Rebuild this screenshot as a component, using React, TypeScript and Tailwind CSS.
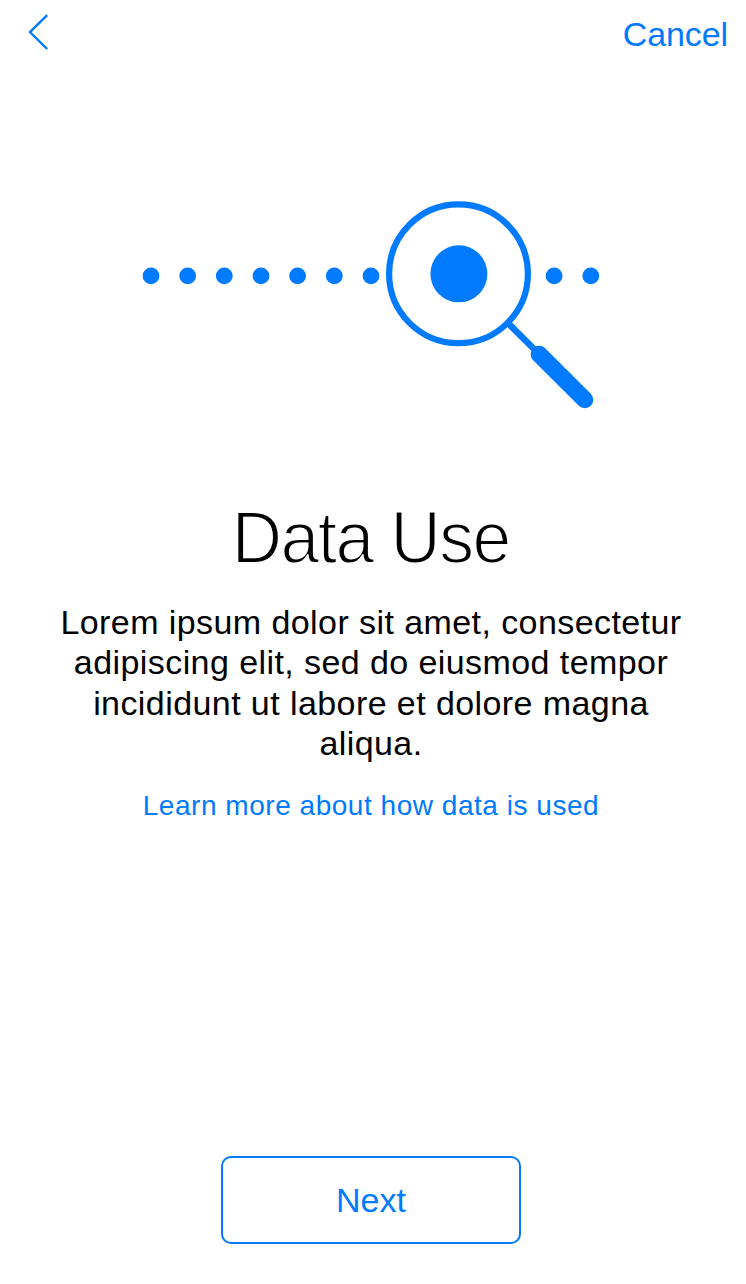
const dots = [151, 187.7, 224.3, 261, 297.6, 334.3, 371, 554.1, 590.8];

function DataIllustration() {
  return (
    <svg className="block h-[230px] w-[742px] text-[#007aff]" viewBox="0 190 742 230" fill="none" aria-hidden="true">
      {dots.map((x) => (
        <circle key={x} cx={x} cy={275.9} r={8.4} fill="currentColor" />
      ))}
      <circle cx={458.5} cy={273.8} r={69.4} stroke="currentColor" strokeWidth={6.2} />
      <circle cx={458.9} cy={273.8} r={28.5} fill="currentColor" />
      <path d="M508.5 323.5 538 353" stroke="currentColor" strokeWidth={6.6} />
      <path d="M539.2 354.2 584.8 399.8" stroke="currentColor" strokeWidth={17} strokeLinecap="round" />
    </svg>
  );
}

export default function App() {
  return (
    <div className="flex h-[1284px] w-full flex-col bg-white font-['Liberation_Sans',Arial,sans-serif] text-black">
      <header className="flex h-[68px] shrink-0 items-center justify-between pl-[26px] pr-[18px] text-[#007aff]">
        <button aria-label="Back" className="pb-1">
          <svg className="block h-10 w-6" viewBox="26 12 24 40" fill="none" aria-hidden="true">
            <path d="M47.2 15.2 30 32.1 47.2 49" stroke="currentColor" strokeWidth={2.4} />
          </svg>
        </button>
        <button className="text-[34px] leading-[44px] tracking-[-0.1px]">Cancel</button>
      </header>

      <main className="flex w-[742px] grow flex-col items-center pt-[122px]">
        <DataIllustration />
        <h1 className="mt-[78px] origin-center scale-x-[0.94] whitespace-nowrap text-[74px] leading-[80px] tracking-[-1.6px] [-webkit-text-stroke:1.8px_white]">
          Data Use
        </h1>
        <p className="mt-[24px] w-[640px] text-center text-[34px] leading-[40.4px] tracking-[0.42px]">
          Lorem ipsum dolor sit amet, consectetur adipiscing elit, sed do eiusmod tempor incididunt ut labore et dolore magna aliqua.
        </p>
        <a href="#" className="mt-[22px] text-[28px] leading-[40px] tracking-[0.53px] text-[#007aff]">
          Learn more about how data is used
        </a>
        <button className="mb-10 mt-auto h-[88px] w-[300px] rounded-[10px] border-2 border-[#007aff] text-[34px] leading-[44px] text-[#007aff]">
          Next
        </button>
      </main>
    </div>
  );
}
